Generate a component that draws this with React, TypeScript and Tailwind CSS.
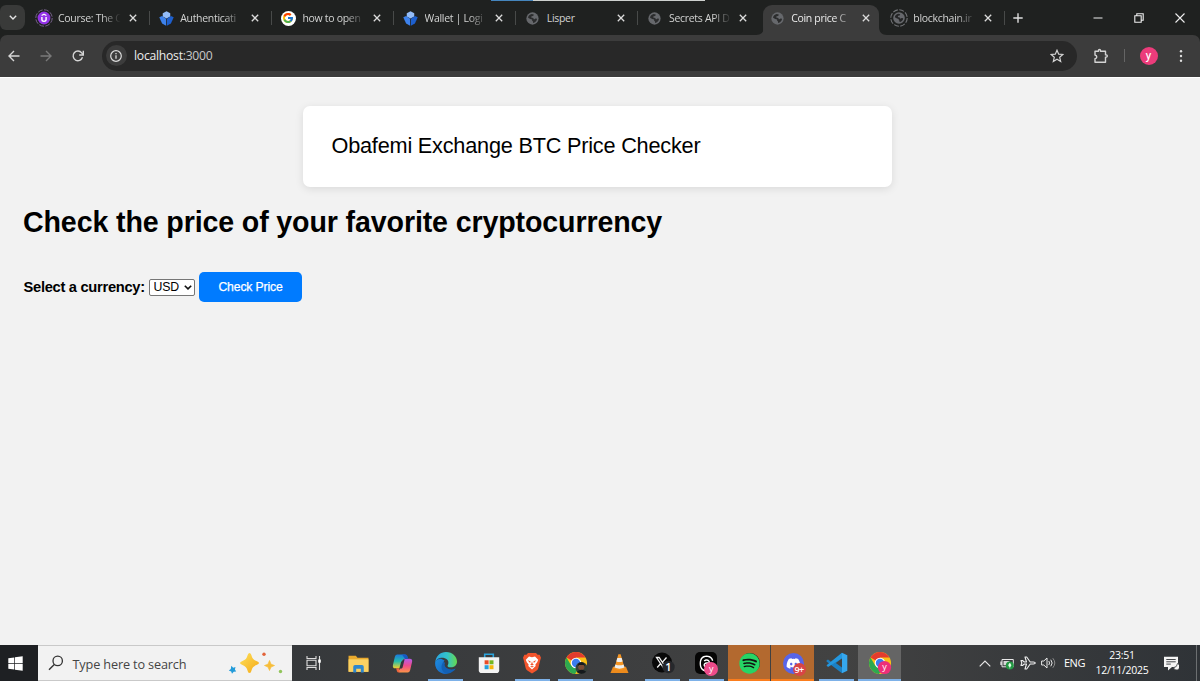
import { useState } from "react";
import type { ReactNode } from "react";
import { FcGoogle } from "react-icons/fc";
import { FaDiscord, FaSpotify } from "react-icons/fa";
import { FaThreads } from "react-icons/fa6";

const GlobeIcon = () => (
  <svg viewBox="0 0 14 14" className="size-[13px]">
    <circle cx="7" cy="7" r="6.6" fill="#66686c" />
    <path
      d="M6.2 2.2C4 2.6 2.5 4 2.2 6.2L4.6 7.6 6.6 8v1.3l1 .9v1.6c2.200-.3 4.200-2.200 4.300-4.500L10.200 7 8.600 8 7.800 6.400 5.600 5.800 6 4.500l1.800-.2.6-1.600z"
      fill="#2b2c2d"
    />
  </svg>
);

const BlockIcon = () => (
  <svg viewBox="0 0 16 16" className="size-[15px]">
    <path d="M8 .3l4 2.200v3.300L8 8 4 5.800V2.500z" fill="#93bcf8" />
    <path d="M.3 6.700L3.300 5.200 7.600 8.300v7.400L3.300 13.300z" fill="#3d82ec" />
    <path d="M15.700 6.700l-3-1.500-4.300 3.100v7.400l4.300-2.400z" fill="#1d5fcd" />
  </svg>
);

const CourseIcon = () => (
  <svg viewBox="0 0 18 18" className="size-[18px]">
    <circle cx="9" cy="9" r="8.200" fill="none" stroke="#76628a" strokeWidth="1" strokeDasharray="5 1.400" />
    <circle cx="9" cy="9" r="6.400" fill="#9433e8" />
    <path d="M6.900 8v2.600c0 2.400 4.200 2.400 4.200 0V8" fill="none" stroke="#fff" strokeWidth="1.400" />
    <path d="M6.600 6.500L9 5.200l2.400 1.300" fill="none" stroke="#fff" strokeWidth="1.100" />
  </svg>
);

const LoadingGlobe = () => (
  <svg viewBox="0 0 18 18" className="size-[18px]">
    <circle cx="9" cy="9" r="8.200" fill="none" stroke="#717376" strokeWidth="1.100" strokeDasharray="5 1.440" />
    <circle cx="9" cy="9" r="5.800" fill="#66686c" />
    <path
      d="M8.300 4.800C6.400 5.100 5 6.400 4.800 8.300L7 9.500l1.700.4V11l.8.8v1.300c2-.3 3.600-1.900 3.700-3.900L11.700 9l-1.300.8-.7-1.400-1.900-.5.3-1.100 1.600-.2.500-1.400z"
      fill="#242526"
    />
  </svg>
);

const GoogleIcon = () => (
  <span className="flex size-[15px] items-center justify-center rounded-full bg-white">
    <FcGoogle className="size-[12px]" />
  </span>
);

type TabItem = {
  title: string;
  icon: ReactNode;
  active?: boolean;
  noLine?: boolean;
};

const tabs: TabItem[] = [
  { title: "Course: The C", icon: <CourseIcon /> },
  { title: "Authenticati", icon: <BlockIcon /> },
  { title: "how to open", icon: <GoogleIcon /> },
  { title: "Wallet | Logi", icon: <BlockIcon /> },
  { title: "Lisper", icon: <GlobeIcon /> },
  { title: "Secrets API D", icon: <GlobeIcon />, noLine: true },
  { title: "Coin price C", icon: <GlobeIcon />, active: true, noLine: true },
  { title: "blockchain.ir", icon: <LoadingGlobe /> },
];

const Tab = ({ title, icon, active, noLine }: TabItem) => (
  <div className="relative flex h-[30px] w-[122.200px] shrink-0 items-center">
    {active && (
      <>
        <div className="absolute inset-y-0 left-[2.500px] right-[3.500px] rounded-t-[9px] bg-[#3c3c3c]" />
        <svg viewBox="0 0 8 8" className="absolute bottom-0 left-[-5px] size-2">
          <path d="M8 0v8H0c5 0 8-3 8-8z" fill="#3c3c3c" />
        </svg>
        <svg viewBox="0 0 8 8" className="absolute right-[-4px] bottom-0 size-2">
          <path d="M0 0v8h8C3 8 0 5 0 0z" fill="#3c3c3c" />
        </svg>
      </>
    )}
    <span className="relative ml-[7px] flex w-[19px] justify-center pb-[4px]">{icon}</span>
    <span
      className={`relative ml-[4.500px] w-[64px] pb-[3px] text-[10.500px] leading-[15px] tracking-[-0.300px] whitespace-nowrap ${
        active ? "text-[#ececec]" : "text-[#d2d3d2]"
      } ${title === "Lisper" ? "" : "[mask-image:linear-gradient(to_right,#000_68%,transparent_98%)]"}`}
    >
      {title}
    </span>
    <svg viewBox="0 0 8 8" className="relative mb-[4px] ml-[6.500px] size-2 shrink-0">
      <path d="M.8.800l6.400 6.400M7.200.800L.8 7.200" stroke="#dcdcdc" strokeWidth="1.300" />
    </svg>
    {!noLine && <span className="absolute top-[6px] right-0 h-[14px] w-px bg-[#484a49]" />}
  </div>
);

const Chrome = ({ children }: { children?: ReactNode }) => (
  <svg viewBox="0 0 24 24" className="size-6">
    <circle cx="12" cy="12" r="11" fill="#fbc116" />
    <path d="M12 12L2.500 6.500A11 11 0 0 1 21.500 6.500H12z" fill="#e33b2e" />
    <path d="M2.500 6.500A11 11 0 0 0 11 23l5.500-8.500L12 12 7.300 14.700z" fill="#2da94f" />
    <circle cx="12" cy="12" r="5.300" fill="#fff" />
    <circle cx="12" cy="12" r="4.200" fill="#3b7ded" />
    {children}
  </svg>
);

const FolderIcon = () => (
  <svg viewBox="0 0 20 18" className="h-[19px] w-[21px]">
    <path d="M.5 1.500h7l1.500 2h10.500v13H.5z" fill="#e9a92d" />
    <path d="M.5 5h19v12H.500z" fill="#fad163" />
    <path d="M5 17.500v-5.300q0-1.700 1.700-1.700h6.600q1.700 0 1.700 1.700v5.300h-2.800V14H7.800v3.500z" fill="#2f87cd" />
  </svg>
);

const CopilotIcon = () => (
  <svg viewBox="0 0 22 22" className="size-[21px]">
    <defs>
      <linearGradient id="copA" x1="0" y1="0" x2="0" y2="1">
        <stop offset="0" stopColor="#1b78df" />
        <stop offset=".5" stopColor="#25bcac" />
        <stop offset="1" stopColor="#f3d02c" />
      </linearGradient>
      <linearGradient id="copB" x1="0" y1="0" x2="0" y2="1">
        <stop offset="0" stopColor="#b35bea" />
        <stop offset=".5" stopColor="#f04c8b" />
        <stop offset="1" stopColor="#fb9545" />
      </linearGradient>
    </defs>
    <path d="M5.500 1.500h8q2 0 1.500 2.200l-1.300 1.600-2.400 8.200q-.7 2.500-3 2.500H3.400Q.3 16 1 12.500L3 4q.7-2.500 2.500-2.500z" fill="url(#copA)" />
    <path d="M16.500 20.500h-8q-2 0-1.500-2.200l1.300-1.600 2.400-8.200q.7-2.500 3-2.500h4.900q3.100 0 2.400 3.500L19 18q-.7 2.500-2.500 2.500z" fill="url(#copB)" />
    <path d="M9.500 9.500L12 6.500h1.200L11 15.500 9.500 16.500 7.800 16z" fill="#34383b" />
    <path d="M10.500 1.500h3.800q1.500.2 2 2l.7 2.500h-3.500z" fill="#1759c5" />
    <path d="M7.500 16H4.300l.8 2.800q.5 1.700 2.200 1.700H9q-1.500-.2-1.500-2.200z" fill="#ef673d" />
  </svg>
);

const EdgeIcon = () => (
  <svg viewBox="0 0 24 24" className="size-6">
    <defs>
      <linearGradient id="edgeTop" x1="0" y1=".4" x2="1" y2=".4">
        <stop offset="0" stopColor="#2aa5e1" />
        <stop offset=".55" stopColor="#33c3ca" />
        <stop offset="1" stopColor="#66d94d" />
      </linearGradient>
      <linearGradient id="edgeLow" x1="0" y1="0" x2="1" y2="1">
        <stop offset="0" stopColor="#1d8ce0" />
        <stop offset="1" stopColor="#1763bd" />
      </linearGradient>
    </defs>
    <path d="M1.200 11A11 11 0 0 0 19.500 20q2-1.500 2-2.500-5 2-9-.5-2.800-2-1.500-5L7 7.500q-4.500 0-5.800 3.500z" fill="#1260b4" />
    <path d="M1.200 12c0 7 5 11 11.500 11C7 21 5.500 14 10.600 9.500 7 6.500 2 8 1.200 12z" fill="url(#edgeLow)" />
    <path d="M1.200 11.500C1.800 5 6.500 1 12 1c6.700 0 11 4.700 11 9.500 0 4-3 5.800-6 5.800-3.200 0-4-1.200-3-2.600C16 9 11 6.300 7 6.800c-3 .4-5 2-5.800 4.700z" fill="url(#edgeTop)" />
  </svg>
);

const StoreIcon = () => (
  <svg viewBox="0 0 22 22" className="size-[22px]">
    <path d="M6.700 6V2.200h8.600V6" fill="none" stroke="#2ba4dc" strokeWidth="1.600" />
    <path d="M.8 5.200h20.400v13q0 2.800-2.800 2.800H3.600Q.8 21 .8 18.200z" fill="#f3f3f3" />
    <path d="M6.600 8.300h4v4h-4z" fill="#ea4c25" />
    <path d="M11.500 8.300h4v4h-4z" fill="#73b722" />
    <path d="M6.600 13.200h4v4h-4z" fill="#25a0dc" />
    <path d="M11.500 13.200h4v4h-4z" fill="#f5b70c" />
  </svg>
);

const BraveIcon = () => (
  <svg viewBox="0 0 20 22" className="h-[22px] w-5">
    <path d="M6 1h8l1.600 1.800 2-.1 1.400 3-.7 2.200-2 8.300q-.5 1.500-2 2.500L10 21.500l-4.300-2.800q-1.500-1-2-2.500l-2-8.300L1 5.700l1.400-3 2 .1z" fill="#f2542c" />
    <path d="M7 4.600l3 .6 3-.6 3.200 3.200-1 2.500-1.800 2.200.3 1.400-3.700 3.700-3.700-3.700.3-1.400-1.800-2.200-1-2.500z" fill="#fff" />
    <path d="M5.600 8.300l3 .9-.5 1.700zM14.400 8.300l-3 .9.500 1.700zM10 9.200l.7 2.500 1.200.8-1.900 1-1.900-1 1.200-.8zM8 14.500l2 1.100 2-1.100-2-.6z" fill="#f2542c" />
  </svg>
);

const VlcIcon = () => (
  <svg viewBox="0 0 20 22" className="h-[21px] w-[19px]">
    <path d="M3.200 14.500h13.600L19.500 21H.500z" fill="#ed8b1c" />
    <path d="M8.800 1.200h2.400l4.300 15Q10 19.500 4.500 16.200z" fill="#f59523" />
    <path d="M7.700 5.200h4.600l1 3.600q-3.300 1.500-6.600 0zM5.700 12q4.300 1.900 8.600 0l1 3.200q-5.300 2.400-10.600 0z" fill="#eeeeec" />
  </svg>
);

const YoutxIcon = () => (
  <svg viewBox="0 0 24 24" className="size-6">
    <circle cx="11" cy="11.500" r="10" fill="#080808" />
    <path d="M5.500 6.500h2.600l6.500 9.500H12zM15.500 6.500l-4 4.700M9.500 12.800l-3.300 3.700" fill="none" stroke="#f4f4f4" strokeWidth="1.300" />
    <circle cx="17.500" cy="16" r="6.200" fill="#26282c" />
    <text x="17.300" y="20" textAnchor="middle" fontSize="11" fontWeight="600" fill="#fff">
      1
    </text>
  </svg>
);

const ThreadsIcon = () => (
  <span className="relative flex size-[22px] items-center justify-center rounded-[5px] bg-[#050505]">
    <FaThreads className="size-[17px] text-white" />
    <span className="absolute right-[-1px] bottom-[-2px] flex size-[14px] items-center justify-center rounded-full bg-[#ed4b8a] pb-px text-[9px] leading-none text-white">
      y
    </span>
  </span>
);

const SpotifyIcon = () => (
  <span className="flex size-[20px] items-center justify-center rounded-full bg-[#111]">
    <FaSpotify className="size-[21px] shrink-0 text-[#26d565]" />
  </span>
);

const DiscordIcon = () => (
  <span className="relative flex size-[21px] items-center justify-center rounded-full bg-[#5865e8]">
    <FaDiscord className="size-[15px] text-white" />
    <span className="absolute right-[-2px] bottom-[-2px] flex size-[13px] items-center justify-center rounded-full bg-[#d84545] text-[9px] leading-none font-semibold tracking-[-0.500px] text-white">
      9+
    </span>
  </span>
);

const CodeIcon = () => (
  <svg viewBox="0 0 22 22" className="size-[22px]">
    <path d="M16 .7L5.500 10.300 2 7.600l-1.500.8v1.200l15.500 11.700V15.500L9.800 11 16 6.300z" fill="#1b80c4" />
    <path d="M.5 13.300L16 .700v5.600L2 15z" fill="#2497df" />
    <path d="M16 .7l5.300 2.500v15.600L16 21.300z" fill="#35a7ee" />
  </svg>
);

type TaskItem = { id: string; icon: ReactNode; open?: boolean; cell?: string; bar?: string };

const apps: TaskItem[] = [
  { id: "explorer", icon: <FolderIcon /> },
  { id: "copilot", icon: <CopilotIcon /> },
  { id: "edge", icon: <EdgeIcon />, open: true },
  { id: "store", icon: <StoreIcon /> },
  { id: "brave", icon: <BraveIcon />, open: true },
  {
    id: "chrome-1",
    open: true,
    icon: (
      <Chrome>
        <circle cx="17.500" cy="17" r="6" fill="#34403a" />
        <circle cx="17.300" cy="15.800" r="3.200" fill="#7a4d36" />
        <path d="M13.800 15.500q0-4.200 3.500-4.200t3.500 4.200l-1.200-1.500h-4.600zM12.800 20.700q4.700-4 9.400 0-4.700 4.300-9.400 0z" fill="#15191d" />
      </Chrome>
    ),
  },
  { id: "vlc", icon: <VlcIcon /> },
  { id: "x", icon: <YoutxIcon />, open: true },
  { id: "threads", icon: <ThreadsIcon />, open: true },
  { id: "spotify", icon: <SpotifyIcon />, cell: "bg-[#b3692f]", bar: "bg-[#fb7d1d]" },
  { id: "discord", icon: <DiscordIcon />, cell: "bg-[#b3692f]", bar: "bg-[#fb7d1d]" },
  { id: "code", icon: <CodeIcon />, open: true },
  {
    id: "chrome-2",
    cell: "bg-[#656565]",
    bar: "bg-[#7db1e8]",
    icon: (
      <Chrome>
        <circle cx="16.500" cy="16.500" r="6.600" fill="#ed2f79" />
        <text x="16.500" y="19" textAnchor="middle" fontSize="9" fill="#fff">
          y
        </text>
      </Chrome>
    ),
  },
];

const TaskButton = ({ icon, open, cell, bar }: TaskItem) => (
  <div className="relative flex h-9 w-[43.450px] shrink-0 items-center justify-center">
    {cell && <span className={`absolute inset-y-0 right-px left-0 ${cell}`} />}
    <span className="relative flex">{icon}</span>
    {open && <span className="absolute bottom-0 left-[4px] h-[2px] w-[35px] bg-[#7db1e8]" />}
    {bar && <span className={`absolute right-px bottom-0 left-0 h-[2px] ${bar}`} />}
  </div>
);

const Browser = () => (
  <header className="relative h-[77px] shrink-0 bg-[#1f2120] text-[#dedede]">
    <div className="absolute top-0 left-[491px] flex h-px w-[214px]">
      <span className="w-[42px] bg-[#4585bd]" />
      <span className="grow bg-[#cdd0ce]" />
    </div>
    <div className="flex h-[35px] items-start pt-[5px]">
      <div className="flex h-[25px] w-[25px] shrink-0 items-center justify-center rounded-r-[8px] rounded-l-[6px] bg-[#393a39]">
        <svg viewBox="0 0 10 6" className="h-[5px] w-2">
          <path d="M1 .8l4 4 4-4" fill="none" stroke="#e5e5e5" strokeWidth="1.700" />
        </svg>
      </div>
      <div className="ml-[2.500px] flex">
        {tabs.map((tab) => (
          <Tab key={tab.title} {...tab} />
        ))}
      </div>
      <svg viewBox="0 0 10 10" className="mt-[8px] ml-[8px] size-[10px]">
        <path d="M5 .3v9.400M.3 5h9.400" stroke="#dedede" strokeWidth="1.400" />
      </svg>
      <div className="mt-[7.500px] mr-[15px] ml-auto flex items-center gap-[31px]">
        <svg viewBox="0 0 10 10" className="size-[10px]">
          <path d="M.5 5h9" stroke="#eee" />
        </svg>
        <svg viewBox="0 0 10 10" className="size-[10px]">
          <path d="M.8 2.800h6.400v6.400H.8zM2.800 2.800V.800h6.400v6.400h-2" fill="none" stroke="#eee" strokeWidth="1.100" />
        </svg>
        <svg viewBox="0 0 10 10" className="size-[10px]">
          <path d="M.5.500l9 9M9.500.500l-9 9" stroke="#eee" strokeWidth="1.100" />
        </svg>
      </div>
    </div>
    <div className="flex h-[42px] items-center rounded-t-[7px] bg-[#3c3c3c] pb-px">
      <svg viewBox="0 0 12 12" className="ml-[8px] size-3">
        <path d="M11.500 6H1.200M6 1L1 6l5 5" fill="none" stroke="#d6d6d6" strokeWidth="1.400" />
      </svg>
      <svg viewBox="0 0 12 12" className="ml-[20px] size-3">
        <path d="M.5 6h10.300M6 1l5 5-5 5" fill="none" stroke="#797979" strokeWidth="1.400" />
      </svg>
      <svg viewBox="0 0 12 12" className="ml-[20px] size-3">
        <path d="M10.500 7.300A4.800 4.800 0 1 1 9.700 2.900L11 4.500" fill="none" stroke="#d6d6d6" strokeWidth="1.400" />
        <path d="M11.300.800v4.200H7.200" fill="none" stroke="#d6d6d6" strokeWidth="1.400" />
      </svg>
      <div className="ml-[17.500px] flex h-[30px] w-[975.500px] items-center rounded-full bg-[#282828]">
        <span className="ml-[4px] flex size-[21px] items-center justify-center rounded-full bg-[#3c3c3c]">
          <svg viewBox="0 0 12 12" className="size-3">
            <circle cx="6" cy="6" r="5.300" fill="none" stroke="#dcdcdc" strokeWidth="1.200" />
            <path d="M6 5.300v3.400M6 3v1.300" stroke="#dcdcdc" strokeWidth="1.300" />
          </svg>
        </span>
        <span className="ml-[7.500px] pt-[1.500px] text-[12.200px] leading-4 tracking-[-0.260px] text-[#c9c9c9]">
          <span className="text-[#ececec]">localhost</span>:3000
        </span>
        <svg viewBox="0 0 14 14" className="mr-[13.500px] ml-auto size-[14px]">
          <path d="M7 1.200l1.700 4 4.200.3-3.200 2.800 1 4.200L7 10.300l-3.700 2.200 1-4.200L1.100 5.500l4.200-.3z" fill="none" stroke="#d3d3d3" strokeWidth="1.200" />
        </svg>
      </div>
      <svg viewBox="0 0 16 16" className="ml-[15.500px] size-[16px]">
        <path
          d="M2 3.200h3.500V2.500q0-1 1-1t1 1v.700h5v3.700h.8q1 0 1 1.100t-1 1.100h-.8v5.100H2v-3.500q1.800-.4 1.800-1.800T2 7z"
          fill="none"
          stroke="#d3d3d3"
          strokeWidth="1.400"
          strokeLinejoin="round"
        />
      </svg>
      <span className="ml-[15.500px] h-[13px] w-px bg-[#656565]" />
      <span className="ml-[14.500px] flex size-[18px] items-center justify-center rounded-full bg-[#ec3c7b] pb-px text-[10px] leading-none font-semibold text-white">
        y
      </span>
      <svg viewBox="0 0 4 14" className="ml-[21px] h-[14px] w-1">
        <circle cx="2" cy="2.200" r="1.200" fill="#dedede" />
        <circle cx="2" cy="7" r="1.200" fill="#dedede" />
        <circle cx="2" cy="11.800" r="1.200" fill="#dedede" />
      </svg>
    </div>
  </header>
);

const PriceChecker = () => {
  const [currency, setCurrency] = useState("USD");

  return (
    <main className="h-[568px] shrink-0 border-t border-white bg-[#f2f2f2] font-['Liberation_Sans',Arial,sans-serif] text-black">
      <div className="mt-[27.500px] ml-[303px] h-[81.500px] w-[589px] rounded-[7px] bg-white px-[28.500px] py-[27px] text-[21.700px] leading-[25px] tracking-[-0.210px] shadow-[0_2px_9px_rgba(0,0,0,0.1)]">
        Obafemi Exchange BTC Price Checker
      </div>
      <h1 className="mt-[19px] ml-[23px] text-[28.600px] leading-8 font-bold tracking-[-0.130px] whitespace-nowrap">
        Check the price of your favorite cryptocurrency
      </h1>
      <form className="mt-[34px] ml-[23.500px] flex h-[30px] items-center" onSubmit={(e) => e.preventDefault()}>
        <label htmlFor="currency" className="w-[121.500px] text-[14.700px] leading-4 font-bold tracking-[-0.290px] whitespace-nowrap">
          Select a currency:
        </label>
        <div className="relative ml-[4px] flex">
          <select
            id="currency"
            value={currency}
            onChange={(e) => setCurrency(e.target.value)}
            className="h-[17px] w-[46px] appearance-none rounded-[2px] border border-[#767676] bg-white pb-px pl-[3.500px] text-[12.300px] leading-[14px] tracking-[-0.200px]"
          >
            <option>USD</option>
            <option>GBP</option>
            <option>EUR</option>
          </select>
          <svg viewBox="0 0 8 5" className="absolute top-[6px] right-[3.500px] h-[5px] w-2">
            <path d="M.8.700L4 3.900 7.200.700" fill="none" stroke="#111" strokeWidth="1.600" />
          </svg>
        </div>
        <button
          type="submit"
          className="ml-[4px] h-[30px] w-[103px] rounded-[5px] bg-[#007bff] text-[12.200px] tracking-[-0.150px] text-white [-webkit-text-stroke:0.250px_#fff]"
        >
          Check Price
        </button>
      </form>
    </main>
  );
};

const Taskbar = () => (
  <footer className="flex h-9 shrink-0 items-center bg-linear-to-r from-[#303438] via-[#424242] via-70% to-[#2f3337] text-white">
    <div className="flex h-9 w-[37.500px] shrink-0 items-center justify-center bg-[#1e2023] pr-[6px]">
      <svg viewBox="0 0 15 15" className="size-[15px]">
        <path d="M.3 2.300l6-.9v5.700h-6zM7 1.300l7.700-1.100v6.900H7zM.3 7.800h6v5.800l-6-.9zM7 7.800h7.700v7L7 13.700z" fill="#fff" />
      </svg>
    </div>
    <div className="flex h-9 w-[254.500px] shrink-0 items-center border-y border-[#c9c9c9] bg-[#f2f2f2]">
      <svg viewBox="0 0 16 16" className="ml-[10px] size-4">
        <circle cx="9.700" cy="5.900" r="4.700" fill="none" stroke="#333" strokeWidth="1.300" />
        <path d="M6.300 9.400L1 14.700" stroke="#333" strokeWidth="1.400" />
      </svg>
      <span className="ml-[9px] pt-px text-[12.700px] leading-4 tracking-[-0.150px] text-[#454545]">Type here to search</span>
      <svg viewBox="0 0 56 26" className="mt-px mr-[8px] ml-auto h-[26px] w-14">
        <defs>
          <linearGradient id="spark" x1="0" y1="0" x2="1" y2="1">
            <stop offset="0" stopColor="#fde05b" />
            <stop offset="1" stopColor="#f5a916" />
          </linearGradient>
        </defs>
        <path d="M21.500 2q1.500 0 2 2.500.8 4 5 5.500 2.500 1 2.500 2t-2.500 2q-4.200 1.500-5 5.500-.5 2.500-2 2.500t-2-2.500q-.8-4-5-5.500-2.500-1-2.500-2t2.500-2q4.200-1.500 5-5.500.5-2.500 2-2.500z" fill="url(#spark)" />
        <path d="M41.500 9.500l1.500 3.700 3.500 1.300-3.500 1.500-1.500 3.500-1.500-3.500-3.500-1.500 3.500-1.300z" fill="#f7bd39" stroke="#f7bd39" strokeWidth=".7" strokeLinejoin="round" />
        <path d="M3.300 14.800l1.900 2 2.300-.7-.6 2.500 1.300 2-2.500.2L4 22.700l-.8-2.300-2.400-1 2-1.500z" fill="#229bd9" />
        <circle cx="36" cy="3.300" r="1.700" fill="#e2633a" />
        <circle cx="52.500" cy="20.500" r="1.700" fill="#91c55b" />
      </svg>
    </div>
    <div className="flex h-9 w-[45px] shrink-0 items-center pl-[14px]">
      <svg viewBox="0 0 16 16" className="size-4">
        <path d="M1 1v2.500h9V1M1 5.300h9v5.400H1zM1 15v-2.500h9V15M13.500 1v14" fill="none" stroke="#dedede" strokeWidth="1.100" />
        <path d="M12.200 4.500h2.600v3.200h-2.600z" fill="#fff" />
      </svg>
    </div>
    {apps.map((app) => (
      <TaskButton key={app.id} {...app} />
    ))}
    <div className="ml-auto flex h-9 items-center">
      <svg viewBox="0 0 12 7" className="h-[7px] w-3">
        <path d="M.7 6.300L6 1l5.300 5.300" fill="none" stroke="#e8e8e8" strokeWidth="1.200" />
      </svg>
      <svg viewBox="0 0 14 13" className="ml-[9px] h-[13px] w-[14px]">
        <path d="M2 2.500h11.300v7.300H2z" fill="none" stroke="#e8e8e8" />
        <path d="M3.500 4h6v4.300h-6zM.3 4.500H2v3.500H.3z" fill="#d7d7d7" />
        <circle cx="9.800" cy="8.600" r="4" fill="#239843" />
        <path d="M9.800 6q2.600 2.300 0 4.300-2.600-2 0-4.300zM9.800 10v1.700" fill="#e5ffe9" stroke="#e5ffe9" strokeWidth=".4" />
      </svg>
      <svg viewBox="0 0 16 14" className="ml-[6px] h-[14px] w-4">
        <path
          d="M1 4.500h1.500L4.300 6H6.500L5 1h1.700l3.500 5h3.100Q15.300 6.200 15.300 7t-2 1h-3.100l-3.500 5H5l1.500-5H4.300L2.500 9.500H1L1.800 7z"
          fill="none"
          stroke="#efefef"
          strokeWidth="1.100"
          strokeLinejoin="round"
        />
      </svg>
      <svg viewBox="0 0 15 12" className="ml-[5px] h-3 w-[15px]">
        <path d="M.6 4h2.200L6 1v10L2.800 8H.6zM7.800 4q1.500 2 0 4M9.800 2.700q2.700 3.300 0 6.600" fill="none" stroke="#e8e8e8" />
        <path d="M11.800 1.200q4 4.800 0 9.600" fill="none" stroke="#8c8c8c" />
      </svg>
      <span className="ml-[8.500px] w-[22px] text-[11px] leading-4 tracking-[-0.500px]">ENG</span>
      <div className="ml-[9px] w-[54px] text-center text-[10.500px] leading-[15.500px] tracking-[-0.250px] whitespace-nowrap">
        <div>23:51</div>
        <div>12/11/2025</div>
      </div>
      <svg viewBox="0 0 16 15" className="mr-[17.500px] ml-[13.500px] h-[15px] w-4">
        <path d="M1 .700h14v10.200H9l-4 3.500v-3.500H1z" fill="#f4f4f4" />
        <path d="M3.300 3.500h9.400M3.300 5.800h9.400M3.300 8.100h4.500" stroke="#44474a" />
        <path d="M14.500 7.500a3.300 3.300 0 1 1-4 4.200q3.700-.5 4-4.200z" fill="#f4f4f4" stroke="#393c3f" strokeWidth=".8" />
      </svg>
      <span className="mr-[3px] h-9 w-px bg-[#6c6f71]" />
    </div>
  </footer>
);

const App = () => {
  return (
    <div className="flex h-[681px] w-[1200px] flex-col overflow-hidden font-['Open_Sans','Noto_Sans',sans-serif]">
      <Browser />
      <PriceChecker />
      <Taskbar />
    </div>
  );
};

export default App;
